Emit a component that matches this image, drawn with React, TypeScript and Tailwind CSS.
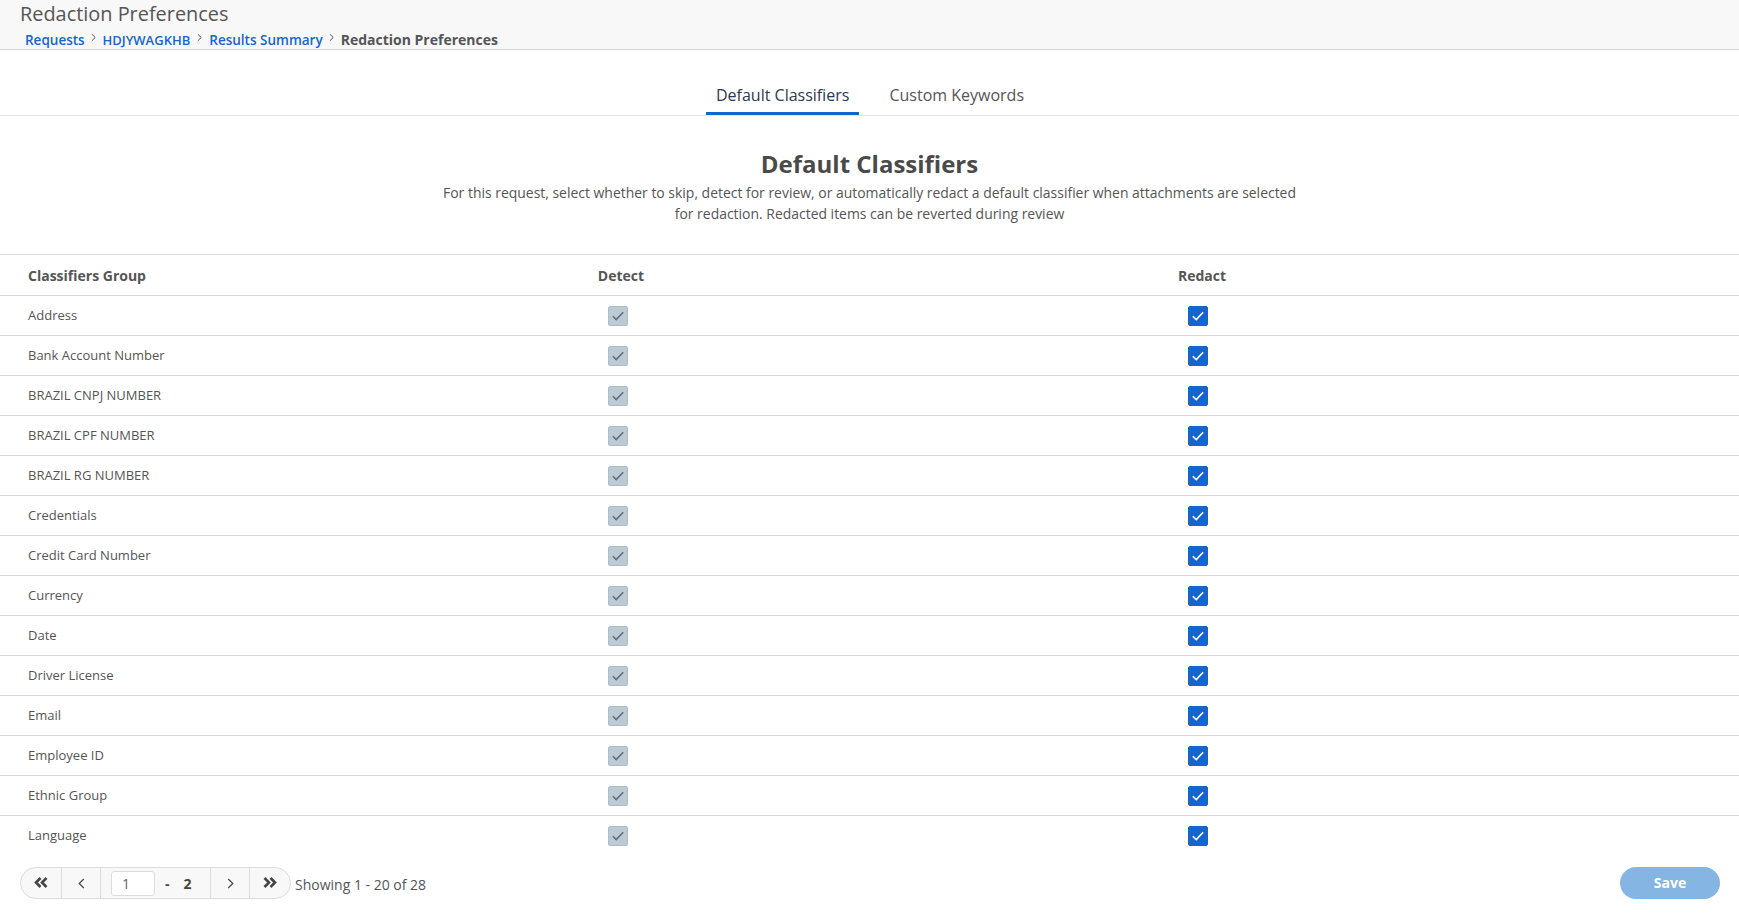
const rows = [
  "Address",
  "Bank Account Number",
  "BRAZIL CNPJ NUMBER",
  "BRAZIL CPF NUMBER",
  "BRAZIL RG NUMBER",
  "Credentials",
  "Credit Card Number",
  "Currency",
  "Date",
  "Driver License",
  "Email",
  "Employee ID",
  "Ethnic Group",
  "Language",
];

function Chevron({ className = "" }: { className?: string }) {
  return (
    <svg width="7" height="11" viewBox="0 0 7 11" fill="none" className={className}>
      <path d="M1.2 1 L5.8 5.5 L1.2 10" stroke="#444" strokeWidth="1.2" />
    </svg>
  );
}

function Double({ flip = false }: { flip?: boolean }) {
  return (
    <svg width="14" height="11" viewBox="0 0 14 11" fill="none" className={"-mt-[2px] " + (flip ? "rotate-180" : "")}>
      <path d="M1.5 1 L6 5.5 L1.5 10 M7.5 1 L12 5.5 L7.5 10" stroke="#444" strokeWidth="2.6" />
    </svg>
  );
}

function Check({ on }: { on: boolean }) {
  return (
    <span
      className={
        "flex h-5 w-5 items-center justify-center rounded-[2px] border " +
        (on ? "border-[#1565d0] bg-[#1565d0]" : "border-[#aebcc7] bg-[#bccad4]")
      }
    >
      <svg width="14" height="12" viewBox="0 0 14 12" fill="none">
        <path d="M1.8 6.2 L5.2 9.6 L12.2 2.2" stroke={on ? "#fff" : "#5d7080"} strokeWidth="1.6" />
      </svg>
    </span>
  );
}

export default function App() {
  return (
    <div className="flex h-screen flex-col overflow-hidden bg-white font-['Open_Sans',sans-serif] text-[#4a4a4a]">
      <header className="h-[50px] shrink-0 border-b border-[#d4d4d4] bg-[#f8f8f8] pl-5">
        <h1 className="text-[19.9px] leading-[28px] font-normal text-[#555]">Redaction Preferences</h1>
        <nav className="flex h-[21px] items-center pl-[5px] text-[13.5px] font-semibold">
          <a className="mt-[4px] text-[#1565d0]">Requests</a>
          <Chevron className="mx-[5.4px] -mt-[2px] scale-75" />
          <a className="mt-[4px] text-[13px] text-[#1565d0]">HDJYWAGKHB</a>
          <Chevron className="mx-[6px] -mt-[2px] scale-75" />
          <a className="mt-[4px] text-[#1565d0]">Results Summary</a>
          <Chevron className="mx-[5.5px] -mt-[2px] scale-75" />
          <span className="mt-[2px] text-[14px] font-bold text-[#555]">Redaction Preferences</span>
        </nav>
      </header>

      <div className="flex h-[66px] shrink-0 items-end justify-center border-b border-[#e6e6e6] pl-[1px] text-[16px]">
        <div className="flex h-[42px] items-start border-b-[3px] border-[#1565d0] px-[10px] pt-[11px] leading-[22px] text-[#2b3a4f]">
          Default Classifiers
        </div>
        <div className="ml-[20px] flex h-[42px] items-start px-[10px] pt-[11px] leading-[22px] text-[#555]">
          Custom Keywords
        </div>
      </div>

      <section className="h-[138px] shrink-0 pt-[30px] text-center">
        <h2 className="text-[24px] leading-[36px] font-bold text-[#4a4a4a]">Default Classifiers</h2>
        <p className="mx-auto w-[866px] text-[13.95px] leading-[21px] text-[#555]">
          For this request, select whether to skip, detect for review, or automatically redact a default classifier
          when attachments are selected for redaction. Redacted items can be reverted during review
        </p>
      </section>

      <div className="grid h-[42px] shrink-0 grid-cols-[464px_314px_848px_1fr] items-center border-y border-[#d8d8d8] text-[14px] font-bold text-[#555]">
        <div className="pl-7">Classifiers Group</div>
        <div className="text-center">Detect</div>
        <div className="text-center">Redact</div>
      </div>

      {rows.map((r, i) => (
        <div
          key={r}
          className={
            "grid h-10 shrink-0 grid-cols-[464px_314px_848px_1fr] items-center text-[13px] text-[#555] " +
            (i < rows.length - 1 ? "border-b border-[#d8d8d8]" : "")
          }
        >
          <div className="pl-7">{r}</div>
          <div className="flex justify-center pr-[6px]">
            <Check on={false} />
          </div>
          <div className="flex justify-center pr-2">
            <Check on />
          </div>
        </div>
      ))}

      <footer className="flex items-center justify-between pt-[11px] pr-[19px] pl-5">
        <div className="flex items-center">
          <div className="flex h-8 items-stretch overflow-hidden rounded-full border border-[#dcdcdc] bg-[#f8f8f8] text-[#444]">
            <button className="flex w-[41px] items-center justify-center border-r border-[#dcdcdc]">
              <Double flip />
            </button>
            <button className="flex w-[39px] items-center justify-center border-r border-[#dcdcdc]">
              <Chevron className="rotate-180" />
            </button>
            <div className="flex w-[110px] items-center border-r border-[#dcdcdc] pl-[10px]">
              <span className="flex h-[25px] w-[44px] items-center rounded-[3px] border border-[#dcdcdc] bg-white pl-[10px] text-[14px] text-[#666]">
                1
              </span>
              <span className="ml-[10px] text-[14px] font-bold">-</span>
              <span className="ml-[14px] text-[14px] font-bold">2</span>
            </div>
            <button className="flex w-[39px] items-center justify-center border-r border-[#dcdcdc]">
              <Chevron />
            </button>
            <button className="flex w-[40px] items-center justify-center">
              <Double />
            </button>
          </div>
          <span className="ml-1 pt-[2px] text-[14px] text-[#555]">Showing 1 - 20 of 28</span>
        </div>
        <button className="h-8 w-[100px] rounded-full bg-[#85b6e3] pb-[2px] text-[14px] font-bold text-white">Save</button>
      </footer>
    </div>
  );
}
